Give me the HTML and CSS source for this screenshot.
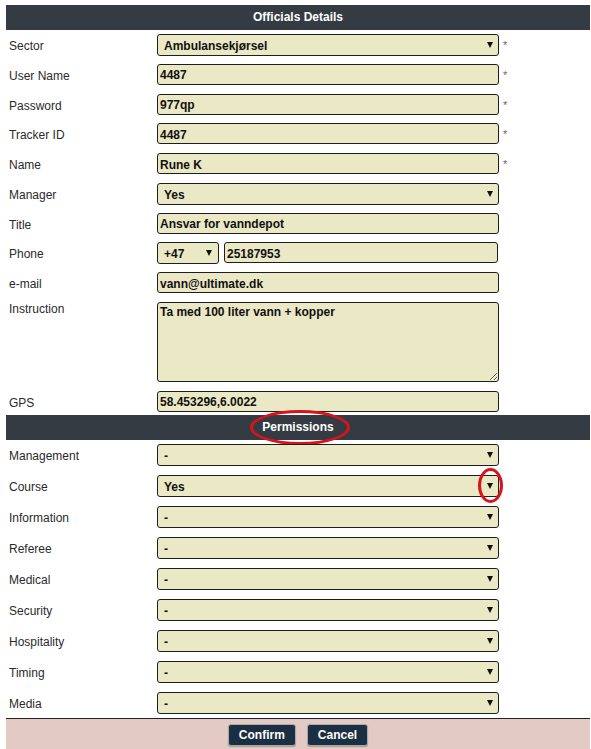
FILE: index.html
```html
<!DOCTYPE html>
<html lang="no">
<head>
<meta charset="utf-8">
<title>Officials Details</title>
<link rel="stylesheet" href="styles.css">
</head>
<body>
<div class="form">
  <div class="bar">Officials Details</div>
  <div class="section">
    <div class="row"><span class="label">Sector</span><span class="sel"><select class="field"><option>Ambulansekjørsel</option></select></span><span class="req">*</span></div>
    <div class="row"><span class="label">User Name</span><input class="field" value="4487"><span class="req">*</span></div>
    <div class="row"><span class="label">Password</span><input class="field" value="977qp"><span class="req">*</span></div>
    <div class="row"><span class="label">Tracker ID</span><input class="field" value="4487"><span class="req">*</span></div>
    <div class="row"><span class="label">Name</span><input class="field" value="Rune K"><span class="req">*</span></div>
    <div class="row"><span class="label">Manager</span><span class="sel"><select class="field"><option>Yes</option></select></span></div>
    <div class="row"><span class="label">Title</span><input class="field" value="Ansvar for vanndepot"></div>
    <div class="row"><span class="label">Phone</span><span class="phone"><span class="sel cc"><select class="field"><option>+47</option></select></span><input class="field num" value="25187953"></span></div>
    <div class="row"><span class="label">e-mail</span><input class="field" value="vann@ultimate.dk"></div>
    <div class="row tall"><span class="label top">Instruction</span><textarea class="field area">Ta med 100 liter vann + kopper</textarea></div>
    <div class="row"><span class="label">GPS</span><input class="field" value="58.453296,6.0022"></div>
  </div>
  <div class="bar">Permissions<span class="mark mark-title"></span></div>
  <div class="section perm">
    <div class="row"><span class="label">Management</span><span class="sel"><select class="field"><option>-</option></select></span></div>
    <div class="row"><span class="label">Course</span><span class="sel"><select class="field"><option>Yes</option></select><span class="mark mark-arrow"></span></span></div>
    <div class="row"><span class="label">Information</span><span class="sel"><select class="field"><option>-</option></select></span></div>
    <div class="row"><span class="label">Referee</span><span class="sel"><select class="field"><option>-</option></select></span></div>
    <div class="row"><span class="label">Medical</span><span class="sel"><select class="field"><option>-</option></select></span></div>
    <div class="row"><span class="label">Security</span><span class="sel"><select class="field"><option>-</option></select></span></div>
    <div class="row"><span class="label">Hospitality</span><span class="sel"><select class="field"><option>-</option></select></span></div>
    <div class="row"><span class="label">Timing</span><span class="sel"><select class="field"><option>-</option></select></span></div>
    <div class="row"><span class="label">Media</span><span class="sel"><select class="field"><option>-</option></select></span></div>
  </div>
  <div class="footer">
    <button class="btn">Confirm</button>
    <button class="btn">Cancel</button>
  </div>
</div>
</body>
</html>
```
FILE: styles.css
```css
body {
  margin: 0;
  font-family: "Liberation Sans", Arial, sans-serif;
  font-size: 12px;
  color: #2a2a2a;
  background: #fff;
}
.form {
  margin: 5px 1px 0 6px;
}
.bar {
  position: relative;
  height: 25px;
  line-height: 25px;
  background: #343b43;
  color: #fff;
  font-weight: bold;
  font-size: 12px;
  text-align: center;
}
.section {
  display: flex;
  flex-direction: column;
  gap: 8.75px;
  padding: 4px 0 3.5px;
}
.section.perm {
  gap: 9px;
  padding: 4px 0 4px;
}
.row {
  display: grid;
  grid-template-columns: 151px 342px auto;
  height: 21px;
  align-items: start;
}
.perm .row {
  height: 22px;
}
.row.tall {
  height: 80px;
}
.label {
  padding: 2px 0 0 3px;
  line-height: 21px;
}
.perm .label {
  line-height: 22px;
  padding-top: 1px;
}
.label.top {
  line-height: 14px;
  padding-top: 0;
}
.field {
  box-sizing: border-box;
  width: 342px;
  height: 21px;
  margin: 0;
  padding: 2px 2px 0;
  border: 1px solid #1e1e1e;
  border-radius: 3px;
  background: #ebe8c5;
  color: #111;
  font: bold 12px "Liberation Sans", Arial, sans-serif;
  outline: none;
}
select.field {
  -webkit-appearance: none;
  appearance: none;
  height: 22px;
  padding: 2px 16px 0 6px;
}
.area {
  height: 80px;
  padding: 2px;
  resize: both;
  line-height: 14px;
}
.sel {
  position: relative;
  display: block;
  width: 342px;
}
.sel::after {
  content: "";
  position: absolute;
  right: 6px;
  top: 8px;
  border-left: 3.5px solid transparent;
  border-right: 3.5px solid transparent;
  border-top: 6px solid #111;
  pointer-events: none;
}
.phone {
  display: flex;
  gap: 5px;
  width: 342px;
}
.sel.cc {
  width: 62px;
}
.sel.cc select.field {
  width: 62px;
}
.sel.cc::after {
  right: 7px;
}
.field.num {
  width: 274px;
}
.req {
  margin-left: 4px;
  padding-top: 2px;
  color: #666;
  line-height: 19px;
  font-size: 11px;
}
.mark {
  position: absolute;
  box-sizing: border-box;
  border: 3px solid #d6141c;
  border-radius: 50%;
  pointer-events: none;
}
.mark-title {
  left: 244px;
  top: -5px;
  width: 100px;
  height: 35px;
}
.mark-arrow {
  left: 321px;
  top: -7px;
  width: 25px;
  height: 35px;
}
.footer {
  display: flex;
  justify-content: center;
  gap: 11px;
  height: 31px;
  padding-top: 5px;
  box-sizing: border-box;
  border-top: 1px solid #222;
  background: #e3cac2;
}
.btn {
  height: 22px;
  padding: 0 10px;
  margin: 0;
  border: 1px solid #a4abb1;
  border-radius: 3px;
  background: #1c2e41;
  color: #fff;
  font: bold 12px "Liberation Sans", Arial, sans-serif;
  box-shadow: 0 1px 1px rgba(0, 0, 0, 0.25);
}
```
